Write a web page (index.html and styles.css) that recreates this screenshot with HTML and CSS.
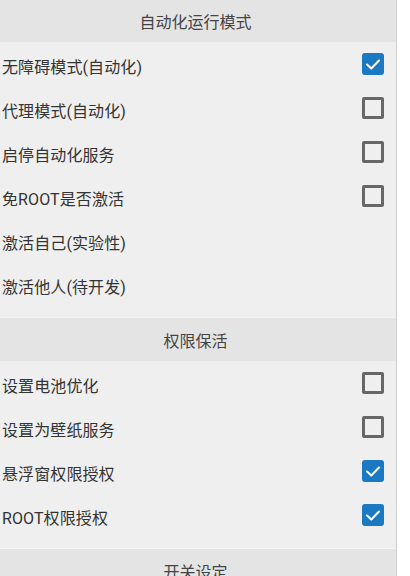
FILE: index.html
```html
<!DOCTYPE html>
<html lang="zh-CN">
<head>
<meta charset="utf-8">
<title>设置</title>
<link rel="stylesheet" href="styles.css">
</head>
<body>
<div class="page">
  <section class="section">
    <div class="header">自动化运行模式</div>
    <div class="row"><span class="label">无障碍模式(自动化)</span><span class="box checked"><svg viewBox="0 0 22 22"><polyline points="5,11.5 9.3,15.5 17,7.5"/></svg></span></div>
    <div class="row"><span class="label">代理模式(自动化)</span><span class="box"></span></div>
    <div class="row"><span class="label">启停自动化服务</span><span class="box"></span></div>
    <div class="row"><span class="label">免ROOT是否激活</span><span class="box"></span></div>
    <div class="row"><span class="label">激活自己(实验性)</span></div>
    <div class="row"><span class="label">激活他人(待开发)</span></div>
  </section>
  <section class="section">
    <div class="header">权限保活</div>
    <div class="row"><span class="label">设置电池优化</span><span class="box"></span></div>
    <div class="row"><span class="label">设置为壁纸服务</span><span class="box"></span></div>
    <div class="row"><span class="label">悬浮窗权限授权</span><span class="box checked"><svg viewBox="0 0 22 22"><polyline points="5,11.5 9.3,15.5 17,7.5"/></svg></span></div>
    <div class="row"><span class="label">ROOT权限授权</span><span class="box checked"><svg viewBox="0 0 22 22"><polyline points="5,11.5 9.3,15.5 17,7.5"/></svg></span></div>
  </section>
  <section class="section">
    <div class="header">开关设定</div>
  </section>
</div>
</body>
</html>
```
FILE: styles.css
```css
html, body {
  margin: 0;
  padding: 0;
  background: #ffffff;
  height: 100%;
  overflow: hidden;
}
.page {
  width: 396px;
  min-height: 100%;
  margin-top: -2px;
  background: #efefef;
  border-right: 1px solid #cfcfcf;
  font-family: Roboto, "Noto Sans CJK SC", sans-serif;
  font-size: 16px;
  color: #333333;
}
.section {
  display: flex;
  flex-direction: column;
  padding-bottom: 11px;
}
.header {
  height: 44px;
  display: flex;
  align-items: center;
  justify-content: center;
  padding-right: 5px;
  background: #e4e4e4;
  color: #444444;
  border-top: 1px solid #f5f5f5;
  box-sizing: border-box;
}
.row {
  height: 44px;
  display: flex;
  align-items: center;
  justify-content: space-between;
  padding: 0 12px 0 2px;
}
.label {
  padding-top: 3px;
  letter-spacing: 0.1px;
}
.box {
  width: 22px;
  height: 22px;
  box-sizing: border-box;
  border: 3px solid #676767;
  border-radius: 2px;
  display: flex;
}
.box.checked {
  border: none;
  border-radius: 3px;
  background: #1b78c2;
}
.box svg {
  width: 22px;
  height: 22px;
}
.box polyline {
  fill: none;
  stroke: #ffffff;
  stroke-width: 2;
  stroke-linecap: round;
  stroke-linejoin: round;
}
```
